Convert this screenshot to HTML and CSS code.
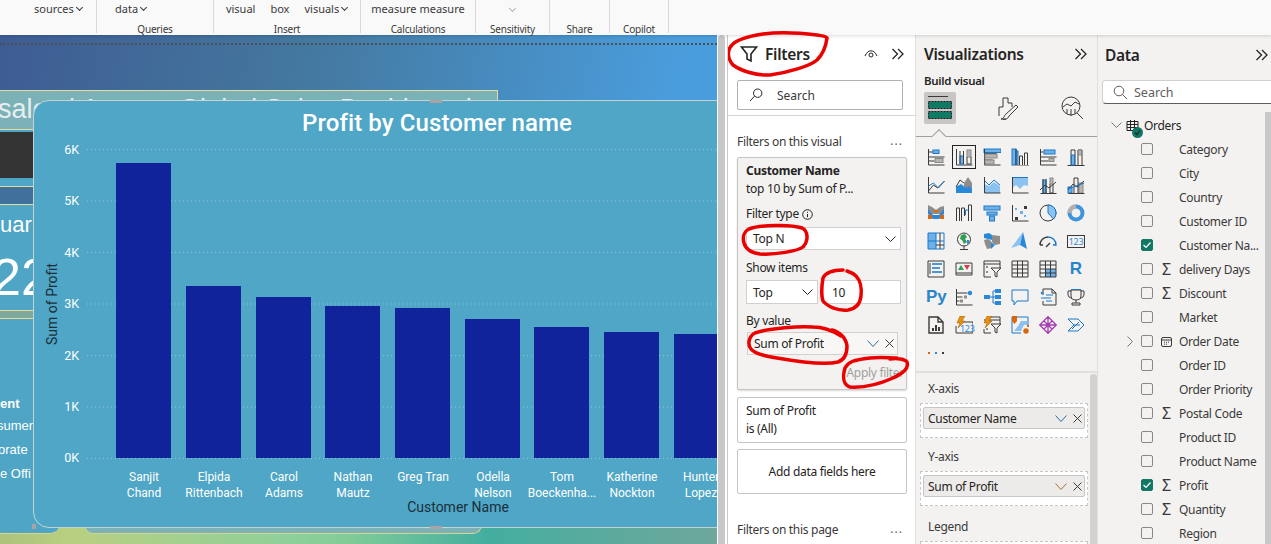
FILE: index.html
```html
<!DOCTYPE html>
<html lang="en">
<head>
  <meta charset="UTF-8">
  <title>Power BI Desktop - Filters</title>
  <meta name="viewport" content="width=device-width, initial-scale=1.0">
  <link rel="stylesheet" href="styles.css">
</head>
<body>

  <!-- ribbon, cut off at the top -->
  <div class="ribbon">
    <div class="group g-sources"><div class="cmds"><span>sources <i class="caret"></i></span></div><div class="group-name"></div></div>
    <div class="group g-queries"><div class="cmds"><span>data <i class="caret"></i></span></div><div class="group-name">Queries</div></div>
    <div class="group g-insert"><div class="cmds"><span>visual</span><span>box</span><span>visuals <i class="caret"></i></span></div><div class="group-name">Insert</div></div>
    <div class="group g-calc"><div class="cmds"><span>measure measure</span></div><div class="group-name">Calculations</div></div>
    <div class="group g-sens"><div class="cmds"><i class="caret muted"></i></div><div class="group-name">Sensitivity</div></div>
    <div class="group g-share"><div class="cmds"></div><div class="group-name">Share</div></div>
    <div class="group g-copilot"><div class="cmds"></div><div class="group-name">Copilot</div></div>
  </div>

  <div class="workspace">

    <!-- report canvas -->
    <div class="canvas">
      <div class="dots"></div>
      <div class="ground"></div>
      <div class="side-panel"></div>
      <div class="under-box"></div>
      <div class="report-title"><span>sales | Agency Global Sales Dashboard</span></div>
      <div class="dark-box"></div>
      <div class="band"></div>
      <div class="kpi-label">Quar</div>
      <div class="kpi-value">22</div>
      <div class="kpi-bar"></div>
      <div class="seg seg-head">ent</div>
      <div class="seg seg-1">sumer</div>
      <div class="seg seg-2">orate</div>
      <div class="seg seg-3">e Offi</div>

      <div class="chart-card">
        <svg class="chart" width="684" height="428" viewBox="33 100 684 428">
          <text class="chart-title" x="437" y="131">Profit by Customer name</text>
          <g class="grid">
            <path d="M87 149.5H717M87 201H717M87 252.5H717M87 304H717M87 355.5H717M87 407H717M87 458.5H717"/>
          </g>
          <g class="y-ticks">
            <text x="79" y="154">6K</text>
            <text x="79" y="205">5K</text>
            <text x="79" y="257">4K</text>
            <text x="79" y="308">3K</text>
            <text x="79" y="360">2K</text>
            <text x="79" y="411">1K</text>
            <text x="79" y="462">0K</text>
          </g>
          <g class="bars">
            <rect x="116" y="163" width="55" height="295"/>
            <rect x="186" y="286" width="55" height="172"/>
            <rect x="256" y="297" width="55" height="161"/>
            <rect x="325" y="306" width="55" height="152"/>
            <rect x="395" y="308" width="55" height="150"/>
            <rect x="465" y="319" width="55" height="139"/>
            <rect x="534" y="327" width="55" height="131"/>
            <rect x="604" y="332" width="55" height="126"/>
            <rect x="674" y="334" width="55" height="124"/>
          </g>
          <g class="x-ticks">
            <text x="144" y="481">Sanjit</text><text x="144" y="497">Chand</text>
            <text x="214" y="481">Elpida</text><text x="214" y="497">Rittenbach</text>
            <text x="284" y="481">Carol</text><text x="284" y="497">Adams</text>
            <text x="353" y="481">Nathan</text><text x="353" y="497">Mautz</text>
            <text x="423" y="481">Greg Tran</text>
            <text x="493" y="481">Odella</text><text x="493" y="497">Nelson</text>
            <text x="562" y="481">Tom</text><text x="562" y="497">Boeckenha...</text>
            <text x="632" y="481">Katherine</text><text x="632" y="497">Nockton</text>
            <text x="701" y="481">Hunter</text><text x="701" y="497">Lopez</text>
          </g>
          <text class="axis-name" x="458" y="512">Customer Name</text>
          <text class="axis-name" transform="translate(57 304) rotate(-90)">Sum of Profit</text>
        </svg>
      </div>
      <div class="handle h-top"></div>
      <div class="handle h-bottom"></div>
      <div class="handle h-corner"></div>
    </div>

    <div class="strip"><div class="strip-thumb"></div></div>

    <!-- filters pane -->
    <div class="pane filters">
      <div class="pane-head">
        <svg class="funnel" width="18" height="18" viewBox="0 0 18 18"><path d="M1.5 2h15l-5.5 7v7l-4-2V9z"/></svg>
        <span class="pane-title">Filters</span>
        <svg class="eye" width="14" height="10" viewBox="0 0 14 10"><path d="M1 7c3-7 9-7 12 0"/><circle cx="7" cy="6" r="2"/></svg>
        <svg class="chevrons" width="14" height="12" viewBox="0 0 14 12"><path d="M1.5 1l5 5-5 5M7 1l5 5-5 5"/></svg>
      </div>
      <div class="search-box">
        <svg class="glass" width="14" height="14" viewBox="0 0 14 14"><circle cx="8.7" cy="5.2" r="4.2"/><path d="M5.6 8.2L1 13"/></svg>
        <span>Search</span>
      </div>
      <div class="filters-rule"></div>

      <div class="section-row"><span>Filters on this visual</span><span class="more">...</span></div>

      <div class="filter-card open">
        <div class="line"><b>Customer Name</b></div>
        <div class="line">top 10 by Sum of P...</div>
        <div class="line mt7">Filter type <svg class="info" width="11" height="11" viewBox="0 0 11 11"><circle cx="5.5" cy="5.5" r="4.8"/><path d="M5.5 5v3.2M5.5 2.8v1"/></svg></div>
        <div class="select">Top N<svg class="down" width="11" height="6" viewBox="0 0 11 6"><path d="M.5.5l5 5 5-5"/></svg></div>
        <div class="line mt9">Show items</div>
        <div class="show-row">
          <div class="select small">Top<svg class="down" width="11" height="6" viewBox="0 0 11 6"><path d="M.5.5l5 5 5-5"/></svg></div>
          <div class="select count">10</div>
        </div>
        <div class="line mt8">By value</div>
        <div class="value-field">Sum of Profit
          <svg class="down blue" width="12" height="7" viewBox="0 0 12 7"><path d="M.5.5l5.5 6 5.5-6"/></svg>
          <svg class="cross" width="9" height="9" viewBox="0 0 9 9"><path d="M.5.5l8 8M8.5.5l-8 8"/></svg>
        </div>
        <div class="apply">Apply filter</div>
      </div>

      <div class="filter-card plain">
        <div class="line">Sum of Profit</div>
        <div class="line">is (All)</div>
      </div>
      <div class="filter-card add">Add data fields here</div>

      <div class="section-row page-row"><span>Filters on this page</span><span class="more">...</span></div>
    </div>

    <!-- visualizations pane -->
    <div class="pane viz">
      <div class="viz-head">
        <span class="pane-title">Visualizations</span>
        <svg class="chevrons" width="14" height="12" viewBox="0 0 14 12"><path d="M1.5 1l5 5-5 5M7 1l5 5-5 5"/></svg>
      </div>
      <div class="build-label">Build visual</div>
      <div class="viz-tabs">
        <div class="viz-tab on">
          <svg width="24" height="24" viewBox="0 0 24 24"><path class="k" d="M0 .5h20"/><rect class="teal" x=".5" y="5.5" width="23" height="7"/><rect class="teal" x=".5" y="15.5" width="23" height="7"/></svg>
        </div>
        <svg class="tab-icon format" width="24" height="24" viewBox="0 0 24 24"><path class="k" d="M4 20v-9h4V2h5v5h4v4M4 11h0M8 23h3"/><path class="k" d="M21 9L11 18c-2 1-1 4-5 5 4 1 7 0 8-3L23 11z"/></svg>
        <svg class="tab-icon analytics" width="24" height="24" viewBox="0 0 24 24"><circle class="k" cx="11" cy="10" r="9"/><path class="k" d="M17 17l6 6M3 11l4-3 4 2 4-4 4 2M7 13v5M11 13v7M15 13v5"/></svg>
      </div>
      <div class="tabs-rule"><span class="notch"></span></div>

      <div class="viz-grid">
        <svg class="vi" viewBox="0 0 18 18"><path class="k" d="M1.5 1v16h16M1.5 4h5M1.5 9h16M1.5 13h6"/><rect class="b" x="6" y="2" width="6" height="3.5"/><rect class="g" x="8" y="10.5" width="8" height="4"/></svg>
        <div class="vi-on"><svg class="vi" viewBox="0 0 18 18"><path class="k" d="M1.5 1v16h16"/><rect class="b" x="5" y="8" width="3.5" height="8"/><rect class="g" x="12" y="2" width="4" height="7"/><path class="k" d="M5 3v13M8.5 3v13M12 9v7h4V9"/></svg></div>
        <svg class="vi" viewBox="0 0 18 18"><rect class="b" x="1" y="1" width="17" height="3.5"/><path class="k" d="M1.5 1v16h16M1.5 5.5h12M1.5 12h8"/><rect class="g" x="2" y="6" width="12" height="4"/><rect class="g" x="2" y="12" width="9" height="4"/></svg>
        <svg class="vi" viewBox="0 0 18 18"><rect class="b" x="1" y="1" width="4" height="16"/><rect class="b" x="5" y="3" width="2" height="14"/><path class="k" d="M5 1v16M8.5 17V8h3v9M13.5 17V5h3v12"/><path class="g-line" d="M1 17.5h17"/></svg>
        <svg class="vi" viewBox="0 0 18 18"><path class="k" d="M1.5 1v16h16M1.5 4h3M1.5 9h16M1.5 13h8"/><rect class="b" x="5" y="2" width="11" height="4"/><rect class="g" x="10" y="10.5" width="5" height="3"/></svg>
        <svg class="vi" viewBox="0 0 18 18"><path class="k" d="M.5 17.5h17M4 17V2h4v15M11 17V2h4v15"/><rect class="b" x="4.5" y="7" width="3" height="10"/><rect class="g" x="11.5" y="2" width="3" height="5"/></svg>

        <svg class="vi" viewBox="0 0 18 18"><path class="k" d="M1.5 1v16h16M1.5 15l5-6 4 3 7-7"/><path class="b-line" d="M1.5 10l5-3 5 5 6-7"/></svg>
        <svg class="vi" viewBox="0 0 18 18"><path class="gf" d="M9 7l4-6 4 6v10H9z"/><path class="bf" d="M1 11l5-3 5 4 3-2 3 3v4H1z"/><path class="k" d="M1 11l4-7 4 3"/></svg>
        <svg class="vi" viewBox="0 0 18 18"><path class="lf" d="M1 8l5 2 5-4 6 4v7H1z"/><path class="b-line" d="M1 4l5 5 5-5 6 5"/><path class="k" d="M1.5 1v16h16"/></svg>
        <svg class="vi" viewBox="0 0 18 18"><path class="lf" d="M1 2h16v8l-4-1-4 4-4-4-4 3z"/><path class="b-line" d="M1 1.5h16"/><path class="k" d="M1.5 1v16h16"/></svg>
        <svg class="vi" viewBox="0 0 18 18"><rect class="b" x="4" y="4" width="3" height="13"/><rect class="g" x="11" y="2" width="3" height="6"/><path class="k" d="M1.5 17.5h16M4 3v14M7 3v14M11 8v9h3V8M1 14l5-5 4 3 7-6"/></svg>
        <svg class="vi" viewBox="0 0 18 18"><rect class="b" x="1" y="11" width="4" height="6"/><rect class="g" x="12" y="7" width="4" height="10"/><path class="k" d="M1.5 17.5h16M7 17V2h4v15M1 14l5-6 4 3 7-6"/><path class="b-line" d="M1 13l16-6"/></svg>

        <svg class="vi" viewBox="0 0 18 18"><path class="gf" d="M1 1l4 2 4 3 4-3 4-1v8H1z"/><path class="bf" d="M1 5l5 6h6l5-6v5l-5 5H6L1 10z"/><rect class="o" x="1" y="11" width="4" height="4"/><rect class="o" x="13" y="11" width="4" height="4"/><rect class="o" x="7" y="6" width="4" height="2"/></svg>
        <svg class="vi" viewBox="0 0 18 18"><path class="k" d="M1.5 17V4h3v13M6.5 17V4h3v8M13.5 17V1h3v16"/><path class="b-line" d="M10.5 11V6h3"/></svg>
        <svg class="vi" viewBox="0 0 18 18"><rect class="b" x="1" y="2" width="16" height="4"/><rect class="b" x="4" y="8" width="10" height="3"/><rect class="b" x="6.5" y="12" width="5" height="5"/></svg>
        <svg class="vi" viewBox="0 0 18 18"><path class="k" d="M1.5 1v16h16"/><rect class="kf" x="13" y="2" width="3" height="3"/><rect class="l" x="4" y="4" width="2" height="2"/><rect class="l" x="9" y="7" width="3" height="3"/><rect class="l" x="13" y="11" width="2" height="2"/><rect class="kf" x="4" y="13" width="3" height="3"/></svg>
        <svg class="vi" viewBox="0 0 18 18"><circle class="k" cx="9" cy="9" r="8"/><path class="lf" d="M9 1a8 8 0 0 1 8 8 8 8 0 0 1-2.5 6L9 9z"/><path class="b-line" d="M9 1a8 8 0 0 1 8 8 8 8 0 0 1-2.5 6L9 9z"/></svg>
        <svg class="vi" viewBox="0 0 18 18"><circle class="donut" cx="9" cy="9" r="6.5"/><path class="donut-g" d="M2.5 9A6.5 6.5 0 0 1 9 2.5"/></svg>

        <svg class="vi" viewBox="0 0 18 18"><rect class="l" x="1" y="1" width="8" height="8"/><rect class="l" x="1" y="9" width="8" height="8"/><path class="b-line" d="M1 1h16v16H1zM1 9h16M9 1v16"/><path class="k" d="M13 1v8M9 13h8M13 9v8"/></svg>
        <svg class="vi" viewBox="0 0 18 18"><circle class="k" cx="9" cy="7.5" r="6.5"/><path class="green" d="M6 3l4-1 2 3-2 2 2 3-3 2-2-4-2-1z"/><path class="bf" d="M12 8l2 0 0 3-2 1z"/><path class="k" d="M5 17.5h8M9 14v3"/></svg>
        <svg class="vi" viewBox="0 0 18 18"><path class="gf" d="M1 8l4-1 3 2 1 7-5 1-2-5zM9 3l8 1v8l-5 1-3-3z"/><path class="bf" d="M1 2l5-1 3 2v5L5 7 1 6zM8 10l4 3-4 4z"/></svg>
        <svg class="vi" viewBox="0 0 18 18"><path class="lf" d="M12 0L0 16l9-3z"/><path class="bf" d="M12 0L9 13l7 4z"/></svg>
        <svg class="vi" viewBox="0 0 18 18"><path class="b-line wide" d="M9 5a8 8 0 0 1 8 8h-3"/><path class="k wide" d="M1 13a8 8 0 0 1 8-8M1 13h3M7 15l4-4"/></svg>
        <div class="vi card-num"><span>123</span></div>

        <svg class="vi" viewBox="0 0 18 18"><path class="k" d="M1 1h16v16H1z"/><path class="b-line wide" d="M5 4h10M5 8h8M5 12h10"/><path class="k" d="M3 3v11"/></svg>
        <svg class="vi" viewBox="0 0 18 18"><path class="k" d="M1 3h16v12H1zM1 13h16"/><path class="green" d="M6 5l3 5H3z"/><path class="red" d="M9 5h6l-3 5z"/></svg>
        <svg class="vi" viewBox="0 0 18 18"><path class="k" d="M1 1h16v7M1 1v16h7M1 4h16"/><rect class="gf" x="3" y="6" width="2" height="2"/><rect class="gf" x="3" y="11" width="2" height="2"/><path class="k" d="M8 8h10l-4 4v5l-2-1v-4z"/></svg>
        <svg class="vi" viewBox="0 0 18 18"><path class="k" d="M1 1h16v16H1zM1 5h16M1 9h16M1 13h16M6.5 1v16M11.5 1v16"/></svg>
        <svg class="vi" viewBox="0 0 18 18"><rect class="l" x="6" y="9" width="11" height="8"/><path class="k" d="M1 1h16v16H1zM1 5h16M1 9h16M1 13h16M6.5 1v16M11.5 1v16"/></svg>
        <div class="vi lang-r">R</div>

        <div class="vi lang-py">Py</div>
        <svg class="vi" viewBox="0 0 18 18"><path class="k" d="M1.5 1v16h16M1.5 5h11M1.5 9h6M1.5 13h3"/><circle class="bf" cx="15" cy="5" r="2.2"/><rect class="gf" x="9" y="7.5" width="3" height="3"/><rect class="gf" x="5" y="11.5" width="3" height="3"/></svg>
        <svg class="vi" viewBox="0 0 18 18"><path class="b-line" d="M7 9h3M10 3v12M10 3h2M10 9h2M10 15h2"/><rect class="bf" x="1" y="7" width="6" height="4"/><rect class="bf" x="12" y="1" width="6" height="4"/><rect class="bf" x="12" y="7" width="6" height="4"/><rect class="bf" x="12" y="13" width="6" height="4"/></svg>
        <svg class="vi" viewBox="0 0 18 18"><path class="b-line" d="M1 2h16v11H6l-3 4v-4H1z"/></svg>
        <svg class="vi" viewBox="0 0 18 18"><path class="k" d="M4 7V1h9l4 4v12H4v-4M13 1v4h4"/><circle class="bf" cx="3" cy="5" r="1.3"/><path class="b-line" d="M7 7h7M2 10h10M7 13h6"/></svg>
        <svg class="vi" viewBox="0 0 18 18"><path class="k" d="M4 3H1v3c0 3 2 4 4 4M14 3h3v3c0 3-2 4-4 4M4 2h10v6c0 3-2 4-5 4s-5-1-5-4zM9 12v3M5 17h8v-2H5z"/><path class="b-line" d="M4 1.5h10"/></svg>

        <svg class="vi" viewBox="0 0 18 18"><path class="k wide" d="M2 1h9l5 5v11H2zM11 1v5h5"/><rect class="kf" x="5" y="12" width="2" height="3"/><rect class="kf" x="8" y="9" width="2" height="6"/><rect class="kf" x="11" y="11" width="2" height="4"/></svg>
        <div class="vi bolt-num"><svg viewBox="0 0 18 18"><path class="k" d="M6 6h12v11H1v-7"/><path class="bolt" d="M5 0h5L7 5h3L3 12l2-5H2z"/></svg><span>123</span></div>
        <svg class="vi" viewBox="0 0 18 18"><path class="k" d="M5 1h12v7M1 13v4h7M1 4h16"/><rect class="gf" x="3" y="12" width="2" height="2"/><path class="k" d="M8 8h10l-4 4v5l-2-1v-4z"/><path class="bolt" d="M4 0h5L6 5h3L2 12l2-5H1z"/></svg>
        <svg class="vi" viewBox="0 0 18 18"><path class="b-line" d="M1 1h16v8M1 1v16h9"/><path class="lf" d="M3 15l4-5 3-5h6v4h-3l-3 6z"/><path class="o" d="M1 0h5v5L3.5 8 1 5z"/><circle class="o" cx="15" cy="15" r="2.7"/><rect class="o" x="16" y="9" width="2" height="2"/></svg>
        <svg class="vi" viewBox="0 0 18 18"><path class="purple" d="M9 .7L17.3 9 9 17.3.7 9zM9 .7v16.6M.7 9h16.6M5 5l8 8M13 5l-8 8"/></svg>
        <svg class="vi" viewBox="0 0 18 18"><path class="b-line" d="M1 3h10l6 6-6 6H1l6-6zM7 9h6M5 13l7-7"/></svg>

        <svg class="vi" viewBox="0 0 18 18"><rect class="o" x="1" y="8" width="2" height="2"/><rect class="bf" x="8" y="8" width="2" height="2"/><rect class="kf" x="15" y="8" width="2" height="2"/></svg>
      </div>

      <div class="wells">
        <div class="wells-body">
          <div class="well-label">X-axis</div>
          <div class="well"><div class="field">Customer Name
            <svg class="down blue" width="12" height="7" viewBox="0 0 12 7"><path d="M.5.5l5.5 6 5.5-6"/></svg>
            <svg class="cross" width="9" height="9" viewBox="0 0 9 9"><path d="M.5.5l8 8M8.5.5l-8 8"/></svg>
          </div></div>
          <div class="well-label">Y-axis</div>
          <div class="well"><div class="field">Sum of Profit
            <svg class="down amber" width="12" height="7" viewBox="0 0 12 7"><path d="M.5.5l5.5 6 5.5-6"/></svg>
            <svg class="cross" width="9" height="9" viewBox="0 0 9 9"><path d="M.5.5l8 8M8.5.5l-8 8"/></svg>
          </div></div>
          <div class="well-label legend">Legend</div>
          <div class="well"></div>
        </div>
        <div class="viz-scroll"></div>
      </div>
    </div>

    <!-- data pane -->
    <div class="pane data">
      <div class="data-head">
        <span class="pane-title">Data</span>
        <svg class="chevrons" width="14" height="12" viewBox="0 0 14 12"><path d="M1.5 1l5 5-5 5M7 1l5 5-5 5"/></svg>
      </div>
      <div class="data-search">
        <svg class="data-glass" width="15" height="15" viewBox="0 0 15 15"><circle cx="6" cy="6" r="4.8"/><path d="M9.5 9.5L14 14"/></svg>
        <span>Search</span>
      </div>
      <div class="data-body">
        <div class="tree">
          <div class="table-row">
            <svg class="tree-down" width="11" height="6" viewBox="0 0 11 6"><path d="M.5.5l5 5 5-5"/></svg>
            <span class="table-icon">
              <svg width="13" height="13" viewBox="0 0 13 13"><path d="M1 2.5h11v9H1zM1 5.5h11M1 8.5h11M4.5 1v11M8.5 1v11"/></svg>
              <i class="loaded"><svg width="7" height="7" viewBox="0 0 7 7"><path d="M1 3.5l2 2 3-4"/></svg></i>
            </span>
            <span>Orders</span>
          </div>
          <div class="row"><i class="box"></i><i class="kind"></i>Category</div>
          <div class="row"><i class="box"></i><i class="kind"></i>City</div>
          <div class="row"><i class="box"></i><i class="kind"></i>Country</div>
          <div class="row"><i class="box"></i><i class="kind"></i>Customer ID</div>
          <div class="row"><i class="box on"><svg width="10" height="10" viewBox="0 0 10 10"><path d="M1.5 5L4 7.5l4.5-5"/></svg></i><i class="kind"></i>Customer Na...</div>
          <div class="row"><i class="box"></i><i class="kind">&Sigma;</i>delivery Days</div>
          <div class="row"><i class="box"></i><i class="kind">&Sigma;</i>Discount</div>
          <div class="row"><i class="box"></i><i class="kind"></i>Market</div>
          <div class="row">
            <svg class="tree-right" width="6" height="11" viewBox="0 0 6 11"><path d="M.5.5l5 5-5 5"/></svg>
            <i class="box"></i>
            <i class="kind"><svg class="cal" width="11" height="11" viewBox="0 0 11 11"><rect x=".5" y="1.5" width="10" height="9" rx="1.5"/><path d="M.5 4h10M3 6.2h1M5 6.2h1M7 6.2h1M3 8.2h1M5 8.2h1"/></svg></i>Order Date
          </div>
          <div class="row"><i class="box"></i><i class="kind"></i>Order ID</div>
          <div class="row"><i class="box"></i><i class="kind"></i>Order Priority</div>
          <div class="row"><i class="box"></i><i class="kind">&Sigma;</i>Postal Code</div>
          <div class="row"><i class="box"></i><i class="kind"></i>Product ID</div>
          <div class="row"><i class="box"></i><i class="kind"></i>Product Name</div>
          <div class="row"><i class="box on"><svg width="10" height="10" viewBox="0 0 10 10"><path d="M1.5 5L4 7.5l4.5-5"/></svg></i><i class="kind">&Sigma;</i>Profit</div>
          <div class="row"><i class="box"></i><i class="kind">&Sigma;</i>Quantity</div>
          <div class="row"><i class="box"></i><i class="kind"></i>Region</div>
        </div>
        <div class="data-scroll"></div>
      </div>
    </div>

    <!-- red pen marks over the filters pane -->
    <svg class="pen" width="187" height="544" viewBox="728 0 187 544">
      <path d="M827 38C826 46 822 55 817 60C810 66 790 72 770 75C755 76 740 70 733 65C727 58 727 50 732 45C737 39 750 36 763 34C780 32 800 33 817 35C822 36 826 36 827 38"/>
      <path d="M802 228C808 231 809 240 803 247C798 251 775 255 760 254C752 253 746 250 744 243C742 236 745 231 749 229C760 225 790 224 802 228"/>
      <path d="M843 270C835 270 826 272 823 278C822 284 821 295 823 301C828 307 838 311 848 310C854 309 860 305 861 296C862 288 860 280 856 276C853 273 850 272 847 271"/>
      <path d="M832 330C840 332 846 338 847 346C847 354 844 360 838 362C825 365 800 362 777 358C765 356 755 354 751 349C747 344 749 336 755 333C770 328 800 326 813 327C820 327 830 329 841 336"/>
      <path d="M890 359C897 358 905 359 907 362C909 368 904 373 893 378C882 383 867 388 850 387C844 385 842 378 845 368C848 362 853 360 870 358C880 357 890 358 897 358"/>
    </svg>
  </div>

</body>
</html>
```

FILE: styles.css
```css
html, body {
  margin: 0;
  padding: 0;
  height: 544px;
  overflow: hidden;
}

body {
  font-family: "Noto Sans", sans-serif;
  font-size: 12px;
  letter-spacing: -0.3px;
  color: #252423;
  background-color: #ffffff;
}

svg {
  display: block;
}

/* ribbon */
.ribbon {
  display: flex;
  height: 35px;
  background-color: #f9f9f9;
  box-shadow: 0 1px 3px rgba(0, 0, 0, 0.15);
  position: relative;
  z-index: 2;
  font-size: 11px;
  letter-spacing: 0;
  color: #3b3a39;
}

.group {
  display: flex;
  flex-direction: column;
  height: 33px;
  border-right: 1px solid #d8d8d8;
  box-sizing: border-box;
}

.g-sources { width: 97px; }
.g-queries { width: 117px; }
.g-insert { width: 147px; }
.g-calc { width: 115px; }
.g-sens { width: 74px; }
.g-share { width: 60px; }
.g-copilot { width: 59px; }

.cmds {
  display: flex;
  justify-content: center;
  gap: 15px;
  height: 21px;
  flex-shrink: 0;
  line-height: 18px;
  white-space: nowrap;
}

.g-sources .cmds {
  justify-content: flex-start;
  padding-left: 34px;
}

.g-queries .cmds {
  justify-content: flex-start;
  padding-left: 18px;
}

.group-name {
  flex-shrink: 0;
  text-align: center;
  font-size: 10px;
  letter-spacing: -0.2px;
  line-height: 16px;
}

.caret {
  display: inline-block;
  width: 4px;
  height: 4px;
  border-right: 1px solid #3b3a39;
  border-bottom: 1px solid #3b3a39;
  transform: rotate(45deg);
  margin: 0 1px 3px 0;
}

.caret.muted {
  border-color: #b3b0ad;
  margin-top: 6px;
}

.workspace {
  display: flex;
  height: 509px;
}

/* canvas */
.canvas {
  position: relative;
  width: 717px;
  height: 509px;
  overflow: hidden;
  flex-shrink: 0;
  background: linear-gradient(100deg, #3e5c93 0%, #44789f 38%, #4a9ddc 85%);
}

.dots {
  position: absolute;
  left: 0;
  right: 0;
  top: 8px;
  border-top: 2px dotted #4a4f58;
}

.ground {
  position: absolute;
  left: 0;
  right: 0;
  top: 480px;
  bottom: 0;
  background: linear-gradient(90deg, #aec27c 0%, #b9cf80 10%, #8fd09a 40%, #82cc98 48%, #44ae9f 68%, #6fa79c 100%);
}

.side-panel {
  position: absolute;
  left: 0;
  top: 60px;
  width: 60px;
  height: 439px;
  box-sizing: border-box;
  background-color: #4fa5c5;
  border-bottom: 1px solid #d9d48e;
  border-bottom-right-radius: 10px;
}

.report-title {
  position: absolute;
  left: 0;
  top: 55px;
  width: 498px;
  height: 40px;
  box-sizing: border-box;
  border: 1px solid #e8dc9c;
  border-left: none;
  background-color: #7ab2b8;
  color: #e8eef0;
  font-family: "Liberation Sans", sans-serif;
  font-size: 27px;
  letter-spacing: 0;
  line-height: 36px;
  white-space: nowrap;
  overflow: hidden;
}

.report-title span {
  display: block;
  margin-left: -2px;
}

.dark-box {
  position: absolute;
  left: 0;
  top: 97px;
  width: 40px;
  height: 46px;
  background-color: #333333;
}

.band {
  position: absolute;
  left: 0;
  top: 151px;
  width: 40px;
  height: 17px;
  background-color: #41709c;
  border-top: 1px solid #e8dc9c;
  border-bottom: 1px solid #e8dc9c;
}

.kpi-label {
  position: absolute;
  left: -17px;
  top: 175px;
  color: #ffffff;
  font-size: 22px;
  letter-spacing: 0;
  line-height: 30px;
  font-family: "Liberation Sans", sans-serif;
}

.kpi-value {
  position: absolute;
  left: -8px;
  top: 212px;
  color: #ffffff;
  font-size: 52px;
  letter-spacing: 0;
  line-height: 60px;
  font-family: "Liberation Sans", sans-serif;
}

.kpi-bar {
  position: absolute;
  left: 0;
  top: 275px;
  width: 40px;
  height: 7px;
  background-color: #7fa89a;
  border-top: 1px solid #e8dc9c;
  border-bottom: 1px solid #e8dc9c;
}

.seg {
  position: absolute;
  color: #ffffff;
  font-size: 13px;
  letter-spacing: 0;
  line-height: 18px;
  white-space: nowrap;
  font-family: "Liberation Sans", sans-serif;
}

.seg-head { left: 0; top: 360px; font-weight: bold; }
.seg-1 { left: -3px; top: 382px; }
.seg-2 { left: -2px; top: 406px; }
.seg-3 { left: 0; top: 430px; }

.under-box {
  position: absolute;
  left: 84px;
  top: 490px;
  width: 398px;
  height: 9px;
  box-sizing: border-box;
  background-color: #7ab2b8;
  border: 1px solid #d9d48e;
  border-top: none;
  border-radius: 0 0 10px 10px;
}

.chart-card {
  position: absolute;
  left: 33px;
  top: 65px;
  width: 700px;
  height: 428px;
  box-sizing: border-box;
  background-color: #4fa6c6;
  border: 1px solid #c3d4d2;
  border-top-left-radius: 16px;
  border-bottom-left-radius: 16px;
  overflow: hidden;
}

.chart {
  font-family: "Roboto", sans-serif;
  margin: -1px 0 0 -1px;
  letter-spacing: 0;
}

.chart-title {
  fill: #ffffff;
  font-size: 24px;
  font-weight: 500;
  letter-spacing: 0.1px;
  text-anchor: middle;
}

.grid path {
  stroke: #8fc4d6;
  stroke-dasharray: 1 3;
  fill: none;
}

.y-ticks text {
  fill: #ffffff;
  font-size: 12.5px;
  text-anchor: end;
}

.x-ticks text {
  fill: #ffffff;
  font-size: 12px;
  text-anchor: middle;
}

.bars rect {
  fill: #10239a;
}

.axis-name {
  fill: #1c2f3a;
  font-size: 14px;
  text-anchor: middle;
}

.handle {
  position: absolute;
  background-color: #a9a3a3;
}

.h-top { left: 430px; top: 65px; width: 12px; height: 3px; }
.h-bottom { left: 430px; top: 491px; width: 12px; height: 3px; }
.h-corner { left: 32px; top: 489px; width: 4px; height: 5px; }

.strip {
  width: 11px;
  background-color: #ffffff;
  border-right: 1px solid #c8c8c8;
  box-sizing: border-box;
  flex-shrink: 0;
  padding: 0 2px 0 1px;
}

.strip-thumb {
  height: 100%;
  background-color: #c8c8c8;
  border-radius: 4px 4px 0 0;
}

/* panes */
.pane {
  height: 509px;
  box-sizing: border-box;
  overflow: hidden;
  flex-shrink: 0;
}

.pane-title {
  font-size: 15.5px;
  font-weight: 600;
  line-height: 20px;
  color: #252423;
}

.chevrons path,
.eye path, .eye circle,
.funnel path,
.glass circle, .glass path,
.data-glass circle, .data-glass path,
.down path, .cross path,
.tree-down path, .tree-right path,
.info circle, .info path {
  fill: none;
  stroke: #252423;
}

.chevrons path {
  stroke-width: 1.3;
}

.funnel path {
  stroke-width: 1.6;
}

/* filters pane */
.filters {
  width: 187px;
  background-color: #ffffff;
}

.pane-head {
  display: flex;
  align-items: center;
  height: 45px;
  padding: 0 10px 8px 12px;
  box-sizing: border-box;
  gap: 7px;
}

.eye {
  margin-left: auto;
  margin-right: 6px;
}

.search-box {
  display: flex;
  align-items: center;
  gap: 14px;
  height: 30px;
  margin: 0 12px 0 9px;
  padding-left: 11px;
  border: 1px solid #b3b0ad;
  border-radius: 2px;
  box-sizing: border-box;
  color: #3b3a39;
  letter-spacing: 0;
}

.filters-rule {
  height: 1px;
  margin-top: 5px;
  background-color: #d8d6d4;
}

.section-row {
  display: flex;
  justify-content: space-between;
  margin: 17px 12px 0 9px;
  line-height: 18px;
  color: #3b3a39;
}

.more {
  color: #605e5c;
  letter-spacing: 1px;
  line-height: 16px;
}

.filter-card {
  margin: 7px 8px 0 9px;
  border: 1px solid #c8c6c4;
  border-radius: 2px;
  box-sizing: border-box;
  padding: 4px 5px 4px 8px;
}

.filter-card.open {
  margin-top: 6px;
  height: 233px;
  background-color: #f3f2f1;
  box-shadow: 0 1px 2px rgba(0, 0, 0, 0.15);
}

.filter-card.plain {
  height: 46px;
}

.filter-card.add {
  display: flex;
  align-items: center;
  justify-content: center;
  height: 45px;
  margin-top: 6px;
  padding: 0;
}

.line {
  line-height: 18px;
  white-space: nowrap;
  display: flex;
  align-items: center;
  gap: 3px;
}

.mt7 { margin-top: 7px; }
.mt8 { margin-top: 8px; }
.mt9 { margin-top: 9px; }

.select {
  display: flex;
  align-items: center;
  justify-content: space-between;
  height: 23px;
  margin-top: 4px;
  padding: 0 4px 0 6px;
  background-color: #ffffff;
  border: 1px solid #d2d0ce;
  box-sizing: border-box;
}

.show-row {
  display: flex;
  gap: 4px;
  margin-top: 3px;
}

.select.small {
  width: 72px;
  height: 24px;
  margin-top: 0;
}

.select.count {
  width: 79px;
  height: 24px;
  margin-top: 0;
  padding-left: 9px;
}

.value-field {
  display: flex;
  align-items: center;
  height: 23px;
  margin: 2px 3px 0 1px;
  padding: 0 3px 0 6px;
  background-color: #f8f7f6;
  border: 1px solid #d2d0ce;
  box-sizing: border-box;
}

.value-field .down { margin-left: auto; margin-right: 6px; }

.down.blue path { stroke: #2b6ca3; }
.down.amber path { stroke: #a8702a; }
.cross path { stroke: #3b3a39; }

.apply {
  margin: 9px -3px 0 0;
  text-align: right;
  line-height: 18px;
  color: #a19f9d;
  white-space: nowrap;
}

.page-row {
  margin-top: 27px;
}

/* visualizations pane */
.viz {
  width: 182px;
  background-color: #f3f2f1;
  border-left: 1px solid #e1dfdd;
}

.viz-head {
  display: flex;
  align-items: center;
  justify-content: space-between;
  height: 37px;
  padding: 0 9px 0 8px;
}

.build-label {
  margin: 0 0 0 8px;
  height: 20px;
  line-height: 18px;
  font-weight: 600;
  font-size: 11.5px;
}

.viz-tabs {
  display: flex;
  align-items: center;
  height: 32px;
  margin-left: 8px;
}

.viz-tab {
  display: flex;
  align-items: center;
  justify-content: center;
  width: 32px;
  height: 32px;
  background-color: #c8c6c4;
  border-radius: 2px;
}

.tab-icon.format { margin-left: 39px; }
.tab-icon.analytics { margin-left: 41px; }

.teal {
  fill: #0f7a64;
  stroke: #1c1c1c;
  stroke-dasharray: 2 1;
}

.tabs-rule {
  position: relative;
  height: 1px;
  margin-top: 12px;
  background-color: #a19f9d;
}

.notch {
  position: absolute;
  left: 18px;
  top: -5px;
  width: 9px;
  height: 9px;
  background-color: #f3f2f1;
  border-top: 1px solid #a19f9d;
  border-left: 1px solid #a19f9d;
  transform: rotate(45deg);
}

.viz-grid {
  display: grid;
  grid-template-columns: repeat(6, 28px);
  grid-auto-rows: 28px;
  align-items: center;
  justify-items: center;
  padding: 6px 0 0 6px;
  height: 234px;
  box-sizing: border-box;
}

.vi {
  width: 18px;
  height: 18px;
}

.vi-on {
  display: flex;
  align-items: center;
  justify-content: center;
  width: 24px;
  height: 24px;
  border: 1px solid #252423;
  box-sizing: border-box;
}

.k { fill: none; stroke: #3b3a39; }
.kf { fill: #3b3a39; }
.b { fill: #6eb1ea; stroke: #1b78c8; }
.bf { fill: #2b88d8; }
.l { fill: #6eb1ea; }
.lf { fill: #8cc2ef; }
.g { fill: #b8b6b4; stroke: #8a8886; }
.gf { fill: #8f8d8b; }
.o { fill: #d9670b; }
.b-line { fill: none; stroke: #1b78c8; }
.g-line { fill: none; stroke: #a19f9d; }
.wide { stroke-width: 1.4; }
.green { fill: #2f9e55; }
.red { fill: #d9394a; }
.bolt { fill: #e8900c; stroke: #9a5b06; stroke-width: 0.5; }
.purple { fill: none; stroke: #a23fb0; stroke-width: 1.3; }
.donut { fill: none; stroke: #3f94dc; stroke-width: 4; }
.donut-g { fill: none; stroke: #b3b0ad; stroke-width: 4; }

.card-num {
  display: flex;
  align-items: center;
  justify-content: center;
  box-sizing: border-box;
  border: 1px solid #3b3a39;
  height: 13px;
  font-size: 9px;
  color: #2b88d8;
}

.lang-r, .lang-py {
  font-family: "Liberation Sans", sans-serif;
  font-size: 17px;
  font-weight: bold;
  letter-spacing: 0;
  color: #2a86c8;
  text-align: center;
  line-height: 18px;
  white-space: nowrap;
}

.lang-py {
  width: 20px;
}

.bolt-num {
  position: relative;
  font-size: 9px;
  color: #2b88d8;
}

.bolt-num span {
  position: absolute;
  left: 5px;
  top: 6px;
}

.wells {
  display: flex;
  border-top: 2px solid #e1dfdd;
  height: 174px;
}

.wells-body {
  width: 170px;
  margin-left: 4px;
}

.viz-scroll {
  width: 7px;
  margin-left: 2px;
  background-color: #d4d2d0;
  border-radius: 3px 3px 0 0;
  margin-top: 1px;
}

.well-label {
  margin: 7px 0 0 8px;
  line-height: 18px;
  color: #3b3a39;
}

.well {
  height: 35px;
  margin-top: 5px;
  background-color: #ffffff;
  border: 1px dashed #c8c6c4;
  box-sizing: border-box;
  padding: 3px 2px 0 2px;
}

.well + .well-label {
  margin-top: 10px;
}

.well + .well-label.legend {
  margin-top: 12px;
}

.field {
  display: flex;
  align-items: center;
  height: 22px;
  padding: 0 2px 0 4px;
  background-color: #edebe9;
  border: 1px solid #c8c6c4;
  border-radius: 2px;
  box-sizing: border-box;
  white-space: nowrap;
}

.field .down { margin-left: auto; margin-right: 6px; }

/* data pane */
.data {
  width: 174px;
  background-color: #f3f2f1;
  border-left: 1px solid #e1dfdd;
}

.data-head {
  display: flex;
  align-items: center;
  justify-content: space-between;
  height: 39px;
  padding: 0 2px 0 7px;
}

.data-search {
  display: flex;
  align-items: center;
  gap: 6px;
  height: 24px;
  margin: 6px -10px 0 4px;
  padding-left: 10px;
  background-color: #ffffff;
  border: 1px solid #d2d0ce;
  border-bottom-color: #605e5c;
  border-radius: 4px;
  box-sizing: border-box;
  color: #605e5c;
  font-size: 12.5px;
  letter-spacing: 0;
}

.data-glass circle, .data-glass path {
  stroke: #605e5c;
}

.data-body {
  display: flex;
  margin-top: 8px;
  height: 432px;
}

.tree {
  flex: 1;
  min-width: 0;
  margin-top: 1px;
}

.data-scroll {
  flex-shrink: 0;
  width: 6px;
  background-color: #c8c8c8;
}

.table-row, .row {
  position: relative;
  display: flex;
  align-items: center;
  height: 24px;
  white-space: nowrap;
  color: #3b3a39;
}

.table-row {
  padding-left: 13px;
  color: #252423;
}

.tree-down {
  margin-right: 4px;
}

.tree-down path, .tree-right path {
  stroke: #797775;
}

.table-icon {
  position: relative;
  margin-right: 5px;
}

.table-icon svg path {
  fill: none;
  stroke: #252423;
}

.loaded {
  position: absolute;
  left: 6px;
  top: 8px;
  width: 11px;
  height: 11px;
  border-radius: 50%;
  background-color: #117865;
  display: flex;
  align-items: center;
  justify-content: center;
}

.loaded path, .box.on path {
  fill: none;
  stroke: #ffffff;
  stroke-width: 1.2;
}

.row {
  padding-left: 43px;
}

.box {
  display: block;
  width: 12px;
  height: 12px;
  border: 1px solid #8a8886;
  border-radius: 2px;
  box-sizing: border-box;
  margin-right: 8px;
}

.box.on {
  background-color: #117865;
  border-color: #117865;
}

.kind {
  display: block;
  width: 11px;
  margin-right: 7px;
  font-style: normal;
  font-size: 16px;
  line-height: 14px;
  color: #3b3a39;
  text-align: center;
}

.cal rect, .cal path {
  fill: none;
  stroke: #3b3a39;
}

.tree-right {
  position: absolute;
  left: 29px;
  top: 7px;
}

/* pen marks */
.pen {
  position: absolute;
  left: 728px;
  top: 0;
  z-index: 3;
  pointer-events: none;
}

.pen path {
  fill: none;
  stroke: #eb0000;
  stroke-width: 3.5;
  stroke-linecap: round;
}
```
